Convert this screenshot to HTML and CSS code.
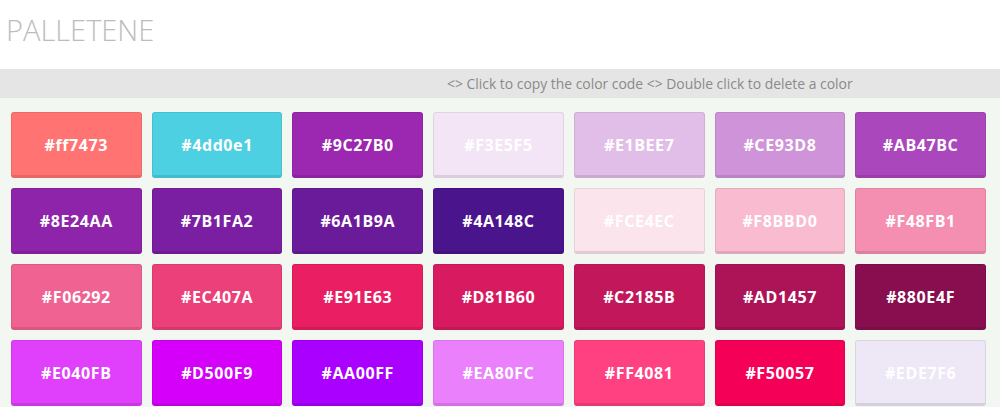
FILE: index.html
```html
<!DOCTYPE html>
<html>
<head>
<meta charset="utf-8">
<link rel="stylesheet" href="styles.css">
</head>
<body>
<header class="header">
  <h1 class="title">PALLETENE</h1>
</header>
<div class="hint">&lt;&gt; Click to copy the color code &lt;&gt; Double click to delete a color</div>
<main class="grid">
  <div class="card" style="background:#ff7473">#ff7473</div>
  <div class="card" style="background:#4dd0e1">#4dd0e1</div>
  <div class="card" style="background:#9C27B0">#9C27B0</div>
  <div class="card" style="background:#F3E5F5">#F3E5F5</div>
  <div class="card" style="background:#E1BEE7">#E1BEE7</div>
  <div class="card" style="background:#CE93D8">#CE93D8</div>
  <div class="card" style="background:#AB47BC">#AB47BC</div>
  <div class="card" style="background:#8E24AA">#8E24AA</div>
  <div class="card" style="background:#7B1FA2">#7B1FA2</div>
  <div class="card" style="background:#6A1B9A">#6A1B9A</div>
  <div class="card" style="background:#4A148C">#4A148C</div>
  <div class="card" style="background:#FCE4EC">#FCE4EC</div>
  <div class="card" style="background:#F8BBD0">#F8BBD0</div>
  <div class="card" style="background:#F48FB1">#F48FB1</div>
  <div class="card" style="background:#F06292">#F06292</div>
  <div class="card" style="background:#EC407A">#EC407A</div>
  <div class="card" style="background:#E91E63">#E91E63</div>
  <div class="card" style="background:#D81B60">#D81B60</div>
  <div class="card" style="background:#C2185B">#C2185B</div>
  <div class="card" style="background:#AD1457">#AD1457</div>
  <div class="card" style="background:#880E4F">#880E4F</div>
  <div class="card" style="background:#E040FB">#E040FB</div>
  <div class="card" style="background:#D500F9">#D500F9</div>
  <div class="card" style="background:#AA00FF">#AA00FF</div>
  <div class="card" style="background:#EA80FC">#EA80FC</div>
  <div class="card" style="background:#FF4081">#FF4081</div>
  <div class="card" style="background:#F50057">#F50057</div>
  <div class="card" style="background:#EDE7F6">#EDE7F6</div>
</main>
</body>
</html>
```
FILE: styles.css
```css
html, body {
  margin: 0;
  padding: 0;
}
body {
  background: #f2f7f2;
  font-family: "Open Sans", "Liberation Sans", sans-serif;
  min-height: 407px;
}
.header {
  background: #ffffff;
  height: 69px;
  display: flex;
  align-items: center;
  padding-left: 6px;
}
.title {
  margin: 0;
  font-family: "Open Sans", sans-serif;
  font-weight: 300;
  font-size: 29px;
  color: #bcbcbc;
  letter-spacing: 0;
  line-height: 1;
  padding-bottom: 10px;
}
.hint {
  background: #e5e5e5;
  height: 29px;
  line-height: 29px;
  font-size: 13.9px;
  color: #8a8a8a;
  padding-left: 447px;
}
.grid {
  display: grid;
  grid-template-columns: repeat(7, 1fr);
  column-gap: 10px;
  row-gap: 10px;
  padding: 14px 14px 0 11px;
}
.card {
  height: 66px;
  box-sizing: border-box;
  border: 1px solid rgba(0, 0, 0, 0.08);
  border-bottom: 3px solid rgba(0, 0, 0, 0.1);
  border-radius: 3px;
  display: flex;
  align-items: center;
  justify-content: center;
  color: #ffffff;
  font-weight: 700;
  font-size: 16px;
  letter-spacing: 0.6px;
  padding-top: 1px;
}
```
